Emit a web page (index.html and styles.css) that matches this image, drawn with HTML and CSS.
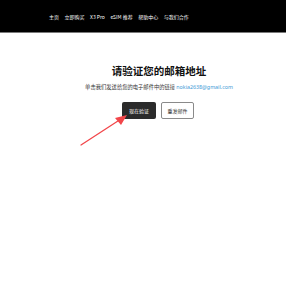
FILE: index.html
```html
<!DOCTYPE html>
<html lang="zh">
<head>
<meta charset="UTF-8">
<title>请验证您的邮箱地址</title>
<link rel="stylesheet" href="styles.css">
</head>
<body>
	<header class="entete">
		<nav class="menu">
			<a href="#">主页</a>
			<a href="#">立即购买</a>
			<a href="#">X3 Pro</a>
			<a href="#">eSIM 推荐</a>
			<a href="#">帮助中心</a>
			<a href="#">与我们合作</a>
		</nav>
	</header>

	<main class="contenu">
		<h1 class="titre">请验证您的邮箱地址</h1>
		<p class="texte">单击我们发送给您的电子邮件中的链接 <span class="courriel">nokia2638@gmail.com</span></p>
		<div class="boutons">
			<a href="#" class="bouton bouton_plein">现在验证</a>
			<a href="#" class="bouton bouton_vide">重发邮件</a>
		</div>
	</main>

	<svg class="fleche" width="60" height="40" viewBox="0 0 60 40">
		<line x1="2" y1="38" x2="42" y2="12" stroke="#f2464a" stroke-width="1.3" stroke-linecap="round"/>
		<polygon points="48,8 36,11 42,18" fill="#f2464a"/>
	</svg>
</body>
</html>
```
FILE: styles.css
```css
html, body
{
	margin : 0;
	padding : 0;
}

body
{
	position : relative;
	width : 286px;
	height : 300px;
	background : #fff;
	font-family : "Noto Sans CJK SC", "Noto Sans", sans-serif;
	color : #222;
}

.entete
{
	height : 32px;
	background : #000;
	border-bottom : 1.5px solid #7a7a7a;
	display : flex;
	align-items : center;
}

.menu
{
	display : flex;
	gap : 5.5px;
	padding-left : 49px;
	margin-top : 1px;
}

.menu a
{
	color : #fff;
	font-size : 5px;
	text-decoration : none;
	white-space : nowrap;
}

.contenu
{
	padding-left : 32px;
	display : flex;
	flex-direction : column;
	align-items : center;
}

.titre
{
	margin : 31px 0 0 0;
	font-size : 10.5px;
	line-height : 14px;
	font-weight : bold;
	color : #111;
}

.texte
{
	margin : 5px 0 0 0;
	font-size : 5.3px;
	line-height : 8px;
	color : #333;
}

.courriel
{
	color : #3d9ad6;
	font-family : "Noto Sans", sans-serif;
}

.boutons
{
	display : flex;
	gap : 5px;
	margin-top : 11px;
	margin-left : -2px;
}

.bouton
{
	box-sizing : border-box;
	width : 34px;
	height : 17px;
	display : flex;
	align-items : center;
	justify-content : center;
	font-size : 5px;
	text-decoration : none;
	border-radius : 2px;
}

.bouton_plein
{
	background : #2b2b2b;
	color : #fff;
}

.bouton_vide
{
	width : 33px;
	border : 1px solid #8a8a8a;
	color : #333;
	background : #fff;
}

.fleche
{
	position : absolute;
	left : 79px;
	top : 107px;
}
```
